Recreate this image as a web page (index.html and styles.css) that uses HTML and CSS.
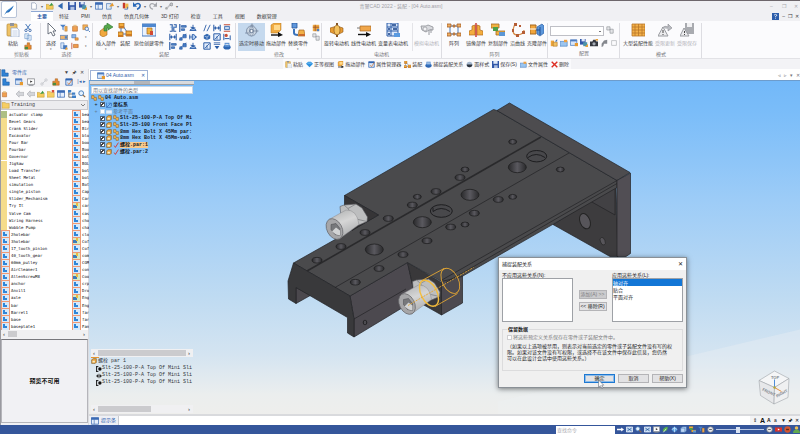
FILE: index.html
```html
<!DOCTYPE html>
<html lang="zh-CN">
<head>
<meta charset="utf-8">
<title>04 Auto.asm</title>
<link rel="stylesheet" href="styles.css">
</head>
<body>
<svg class="sprite" aria-hidden="true">
  <symbol id="quill" viewBox="0 0 16 16"><path d="M1.500 14.500 5 9Q8 7 14.500 2 12 8 8 11L4.500 11.500z" fill="#1d66b5"/><path d="M5 10 13 3" stroke="#8cc4ee" stroke-width=".8"/></symbol>
  <symbol id="new" viewBox="0 0 10 10"><path d="M2 1h4l2 2v6H2z" fill="#fff" stroke="#9aa6bd"/></symbol>
  <symbol id="open" viewBox="0 0 10 10"><path d="M0 9V3h3l1 1h5v5z" fill="#f4ca5c" stroke="#b98f2e" stroke-width=".6"/><path d="m4 5 3-4 2 3z" fill="#3b9a44"/></symbol>
  <symbol id="prev" viewBox="0 0 10 10"><path d="m1 5 6-4v8z" fill="#2f68b0"/></symbol>
  <symbol id="save" viewBox="0 0 10 10"><path d="M0 0h10v10H0z" fill="#3358a8"/><path d="M2 0h6v4H2z" fill="#dfe8f7"/><path d="M3 6h5v4H3z" fill="#aebfe0"/></symbol>
  <symbol id="saveall" viewBox="0 0 10 10"><path d="M0 0h7v7H0z" fill="#3358a8"/><path d="M2 0h4v3H2z" fill="#dfe8f7"/><path d="M4 4h5v5H4z" fill="#4e95a8"/><path d="m6 10 4-4v4z" fill="#e7a43b"/></symbol>
  <symbol id="win" viewBox="0 0 10 10"><path d="M.5 1h9v8h-9z" fill="#e5eefb" stroke="#3d6cb5"/><path d="M.5 1h9v2h-9zM4 3v6" fill="#3d6cb5" stroke="#3d6cb5" stroke-width=".8"/></symbol>
  <symbol id="winstar" viewBox="0 0 10 10"><path d="M.5 1h8v7h-8z" fill="#d7e5f8" stroke="#5482c2"/><path d="M.5 1h8v2h-8z" fill="#4d7cbf"/><path d="M6 5h4v4H6z" fill="#e79a2f"/></symbol>
  <symbol id="winout" viewBox="0 0 10 10"><path d="M.5 2h6v7h-6z" fill="#dce8f7" stroke="#5d85bd"/><path d="m4 6 4-5 2 4z" fill="#e79a2f"/></symbol>
  <symbol id="hand" viewBox="0 0 10 10"><path d="M1 1h3v7H1z" fill="#c53b2e"/><path d="M4 2h4v6H4z" fill="#f0b64a"/><path d="M3 9h4V6" stroke="#3d6cb5" fill="none"/></symbol>
  <symbol id="undo" viewBox="0 0 10 10"><path d="M2 4q5-4 7 0 0 4-4 5" fill="none" stroke="#2a69b8" stroke-width="1.900"/><path d="M0 0v6h5z" fill="#2a69b8"/></symbol>
  <symbol id="redo" viewBox="0 0 10 10"><path d="M8 4Q3 0 1 4q0 4 4 5" fill="none" stroke="#a4a6ab" stroke-width="1.500"/><path d="M10 0v6H5z" fill="#a4a6ab"/></symbol>
  <symbol id="links" viewBox="0 0 10 10"><path d="M1 9V7l4-1V4h3" fill="none" stroke="#a4a6ab"/><circle cx="8" cy="3" r="1.800" fill="#c9cace" stroke="#8d8f94"/><circle cx="2" cy="8" r="1.500" fill="#aaa"/></symbol>
  <symbol id="paste" viewBox="0 0 14 14"><rect x="1" y="1" width="10" height="12" rx="1" fill="#efc266" stroke="#b68b3b" stroke-width=".7"/><path d="M4 0h4v3H4z" fill="#8f949d"/><path d="M5 5h6l2 2v7H5z" fill="#fbfdff" stroke="#8fa5c8" stroke-width=".7"/><path d="M6.500 8h5M6.500 10h5M6.500 12h5" stroke="#a9bbd6" stroke-width=".6"/></symbol>
  <symbol id="cut" viewBox="0 0 10 10"><path d="m2 0 5 7M8 0 3 7" stroke="#4577b8" stroke-width="1.200"/><circle cx="2.500" cy="8" r="1.500" fill="none" stroke="#2c5da3"/><circle cx="7.500" cy="8" r="1.500" fill="none" stroke="#2c5da3"/></symbol>
  <symbol id="copy" viewBox="0 0 10 10"><path d="M1 1h5v6H1zM4 3h5v6H4z" fill="#e4effb" stroke="#6f98ca" stroke-width=".8"/></symbol>
  <symbol id="puzzle" viewBox="0 0 10 10"><path d="M1 4h3V1h3v3h2v5H1z" fill="#e78a2e" stroke="#9d571b" stroke-width=".6"/><path d="M1 6h4v3H1z" fill="#4b8b3e"/></symbol>
  <symbol id="cursor" viewBox="0 0 14 14"><path d="M4 0v11l3-2 2 4 2-1-2-4h3z" fill="#fff" stroke="#5d6572" stroke-width=".9"/></symbol>
  <symbol id="filter" viewBox="0 0 10 10"><path d="M0 1h7L4.500 4v4L3 7V4z" fill="#4d82c8"/><path d="M6 3h3v6H6z" fill="#efac52" stroke="#a8691f" stroke-width=".5"/></symbol>
  <symbol id="cup" viewBox="0 0 10 10"><path d="M2 3h6v6H2z" fill="#f0a04e" stroke="#b15d1e" stroke-width=".7"/><path d="M3 1h4v2H3z" fill="#e9c385"/></symbol>
  <symbol id="find" viewBox="0 0 10 10"><path d="M1 1h6v6H1z" fill="#f2b056" stroke="#b46e27" stroke-width=".6"/><circle cx="6" cy="6" r="2.200" fill="#e5f1ff" stroke="#3f70b4"/><path d="m8 8 2 2" stroke="#3f70b4"/></symbol>
  <symbol id="bar" viewBox="0 0 10 10"><path d="M0 3h10v5H0z" fill="#f0b56c" stroke="#4c7fc0" stroke-width=".9"/><path d="M6 4h3v3H6z" fill="#4a80c2"/></symbol>
  <symbol id="conn" viewBox="0 0 10 10"><path d="M1 2h5v4H1z" fill="#8fb8ea" stroke="#386cae" stroke-width=".7"/><path d="M5 6h4v3H5z" fill="#f1a64b" stroke="#b16a25" stroke-width=".6"/></symbol>
  <symbol id="pair" viewBox="0 0 10 10"><path d="M1 1h4v7H1z" fill="#d4e4f9" stroke="#4676b8" stroke-width=".7"/><path d="M4 4h5v5H4z" fill="#4579bf"/><path d="m6 10 2-4 2 3z" fill="#e9a13e"/></symbol>
  <symbol id="bracket" viewBox="0 0 10 10"><path d="M1 1v8" stroke="#c34b34"/><path d="M3 3h6v4H3z" fill="#f09b49" stroke="#b66120" stroke-width=".7"/></symbol>
  <symbol id="insert" viewBox="0 0 14 14"><path d="M1 8 5 5l3 2v5l-4 2-3-2z" fill="#f1a83e" stroke="#a3651c" stroke-width=".6"/><path d="M5 8V4q0-2 3-2V0l6 4-5 3V5H8v3z" fill="#55a74a" stroke="#2e7330" stroke-width=".6"/></symbol>
  <symbol id="assem" viewBox="0 0 14 14"><path d="M3 5v6h6M5 3l4 6" stroke="#4b77b7" fill="none"/><path d="M1 0h5v5H1zM0 9h5v5H0zM8 8h6v5H8z" fill="#f4ae3e" stroke="#a76820" stroke-width=".8"/><path d="M1 3h5v2H1zM0 12h5v2H0zM8 11h6v2H8z" fill="#cb7b25"/></symbol>
  <symbol id="inplace" viewBox="0 0 14 14"><path d="M0 1h14v12H0z" fill="#e9f2ff" stroke="#4479be"/><path d="M0 1h14v3H0z" fill="#4e87cf"/><path d="M5 5h5v6H5z" fill="#f2b53f" stroke="#a76820" stroke-width=".7"/><path d="M8 8h3v4H8z" fill="#d24a33"/></symbol>
  <symbol id="relA" viewBox="0 0 10 10"><path d="M1 1h3v8H1M6 1h3v3H6v5h3" fill="none" stroke="#285aa5" stroke-width="1.400"/><path d="M2 4h6" stroke="#6698d3"/></symbol>
  <symbol id="relB" viewBox="0 0 10 10"><path d="M1 0v10" stroke="#285aa5" stroke-width="1.500"/><path d="M3 2h6v2H3zM3 6h4v2H3z" fill="#5a8bcb" stroke="#285aa5" stroke-width=".9"/></symbol>
  <symbol id="relC" viewBox="0 0 10 10"><path d="M5 1v4M2 4l6 1M1 8q4-5 8 0z" fill="#9fc1ea" stroke="#285aa5" stroke-width="1.200"/></symbol>
  <symbol id="relD" viewBox="0 0 10 10"><path d="M1 1v8M9 1v8M1 5h8M3 3v4M7 3v4" stroke="#285aa5" stroke-width="1.300"/></symbol>
  <symbol id="relE" viewBox="0 0 10 10"><path d="M0 9 9 1" stroke="#285aa5"/><path d="M1 6h3v3H1zM5 2h4v4H5z" fill="#477cc3" stroke="#285aa5" stroke-width=".8"/></symbol>
  <symbol id="relF" viewBox="0 0 10 10"><path d="M0 5h10" stroke="#285aa5"/><path d="M1 2v6M4 2h2q5 3 0 6H4z" fill="#b2cdf0" stroke="#285aa5" stroke-width="1.200"/></symbol>
  <symbol id="relG" viewBox="0 0 10 10"><path d="M1 9 4 1M5 9l4-8" stroke="#285aa5" stroke-width="1.100"/></symbol>
  <symbol id="relH" viewBox="0 0 10 10"><path d="m1 3 4-2 4 2v4L5 9 1 7z" fill="#3267b1"/><path d="m2 4 3 1 3-2M5 5v4" fill="none" stroke="#cbdcf4" stroke-width=".8"/></symbol>
  <symbol id="relI" viewBox="0 0 10 10"><path d="M1 1h8v8H1z" fill="#e3edfb" stroke="#285aa5" stroke-width="1.200"/><path d="m2 8 6-6M5 4v4" stroke="#285aa5"/></symbol>
  <symbol id="relJ" viewBox="0 0 10 10"><path d="M1 1h8M1 3h8" stroke="#285aa5"/><path d="M2 5h6L5 9z" fill="#285aa5"/></symbol>
  <symbol id="relK" viewBox="0 0 10 10"><path d="M1 1h8M1 9h8" stroke="#c84e36" stroke-width="1.400"/><path d="M2 3h6v4H2z" fill="#c6d9f2" stroke="#285aa5"/></symbol>
  <symbol id="relL" viewBox="0 0 10 10"><path d="M1 1v8M9 3v6M2 7h6" stroke="#285aa5" stroke-width="1.200"/><circle cx="4" cy="3" r="2" fill="#c84e36"/></symbol>
  <symbol id="disc" viewBox="0 0 10 10"><ellipse cx="5" cy="6.500" rx="4.500" ry="3" fill="#2d66b3"/><path d="M2 1h6v5H2z" fill="#5a90d2"/><path d="M3 3h4" stroke="#fff"/></symbol>
  <symbol id="gyro" viewBox="0 0 14 14"><path d="m7 0 2 3H5zM14 8l-3 2V6z" fill="#9aa9bd"/><circle cx="6.500" cy="8" r="5" fill="#cbd6e2" stroke="#8495ac"/><ellipse cx="6.500" cy="8" rx="2" ry="5" fill="none" stroke="#8495ac" stroke-width=".7"/><circle cx="6.500" cy="8" r="1.700" fill="#f4f8fc" stroke="#5d708c"/><path d="M0 10h4M7 2v3M9 8h3" stroke="#70829c" stroke-width=".7"/></symbol>
  <symbol id="drag" viewBox="0 0 14 14"><path d="m2 2 3-2h7v7l-3 3H2z" fill="#f0ab42" stroke="#ad701f" stroke-width=".5"/><path d="M5 2h6v5H5z" fill="#ffd88a"/><path d="M2 12h9" stroke="#111" stroke-width="1.400"/><path d="m9 9 5 3-5 2z" fill="#111"/></symbol>
  <symbol id="replace" viewBox="0 0 14 14"><path d="M1 0h5v5H1z" fill="#5f97dc" stroke="#28599b" stroke-width=".8"/><path d="M3 6v4q0 2 4 2" fill="none" stroke="#3a74bd" stroke-width="2"/><path d="M8 7h5l1 6H7z" fill="#f2b147" stroke="#a96b22" stroke-width=".7"/><path d="M8 11h6v2H8z" fill="#cb6a2d"/></symbol>
  <symbol id="tiles" viewBox="0 0 10 10"><path d="M1 1h8v8H1z" fill="#efaa43"/><path d="M1 4h8M4 1v8" stroke="#9c4e20"/><path d="M6 6h3v3H6z" fill="#4f7fc0"/></symbol>
  <symbol id="dup" viewBox="0 0 10 10"><path d="M1 1h4v4H1zM5 4h4v5H5z" fill="#e4e5e8" stroke="#8f9297" stroke-width=".8"/></symbol>
  <symbol id="rot" viewBox="0 0 14 14"><path d="M0 5 7 3l6 2v4l-6 3-7-3z" fill="#e89c32" stroke="#8c5517" stroke-width=".6"/><path d="M6 0h2v14H6z" fill="#855527"/><ellipse cx="7" cy="7" rx="3" ry="5" fill="#f3c15e" stroke="#7b4b16" stroke-width=".6"/></symbol>
  <symbol id="lin" viewBox="0 0 14 14"><path d="M3 3h11v5H3z" fill="#f0a64a" stroke="#a86722" stroke-width=".7"/><path d="M0 5h3" stroke="#777"/><path d="M1 11.500h9" stroke="#111" stroke-width="1.400"/><path d="m9 9 5 2.500L9 14z" fill="#111"/></symbol>
  <symbol id="vart" viewBox="0 0 14 14"><path d="M1 0h11v13H1z" fill="#dce8fa" stroke="#2e5fa9"/><path d="M1 4h11M1 8h11M5 0v13" stroke="#2e5fa9"/><path d="M6 2h4M2 6h2M7 6h4M2 11h2" stroke="#123e87" stroke-width="1.400"/><path d="M8 10h6v4H8z" fill="#5a9ae0"/></symbol>
  <symbol id="sim" viewBox="0 0 14 14"><path d="M1 3h5l2-1 5 2v3H9l-3 2-4-2z" fill="#d9dade" stroke="#96989e" stroke-width=".9"/><circle cx="5" cy="6" r="2" fill="#f3f3f5" stroke="#96989e" stroke-width=".7"/><path d="M9 7v5M11 6v4" stroke="#96989e"/></symbol>
  <symbol id="pattern" viewBox="0 0 14 14"><path d="M3 3h8v8H3z" fill="none" stroke="#4c7cba"/><path d="M0 1h4v3H0zM10 1h4v3h-4zM0 10h4v3H0zM10 10h4v3h-4zM6 2h2v2H6zM6 10h2v2H6z" fill="#efb064" stroke="#a35d27" stroke-width=".8"/></symbol>
  <symbol id="mirror" viewBox="0 0 14 14"><path d="M0 12V8l3-1V3l3-1v10zM14 12V8l-3-1V3L8 2v10z" fill="#f3ad3e" stroke="#af6c21" stroke-width=".7"/><path d="M7 0v14" stroke="#c82e26" stroke-width="1.400"/></symbol>
  <symbol id="cparts" viewBox="0 0 14 14"><path d="M0 1h8v4H0zM5 8h9v4H5z" fill="#f1b342" stroke="#a46923" stroke-width=".8"/><path d="M2 4h5v4H2z" fill="#4da048"/><path d="M8 9h6v4H8z" fill="#5c97d5"/></symbol>
  <symbol id="curve" viewBox="0 0 14 14"><path d="M4 1Q-1 12 7 12q6-1 6-5" fill="none" stroke="#d48c48" stroke-width="1.200"/><path d="M3 0h3v3H3zM1 6h2v3H1zM5 11h3v3H5zM11 8h3v3h-3zM8 2h2v2H8z" fill="#b55d35"/></symbol>
  <symbol id="clone" viewBox="0 0 14 14"><path d="M0 2h6v9H0z" fill="#f1a53b" stroke="#a46923"/><path d="M0 6h6" stroke="#fff"/><path d="m7 4 5-3 2 2v7l-4 3-3-2z" fill="#5c97db" stroke="#2c61a7" stroke-width=".7"/><path d="M6 7h4M10 4v8" stroke="#214f91"/></symbol>
  <symbol id="mesh" viewBox="0 0 14 14"><path d="M1 1h13v12H1z" fill="#f4b14a"/><path d="M1 1h13v12H1zM4 1v12M7.500 1v12M11 1v12M1 4h13M1 7h13M1 10h13" fill="none" stroke="#b97728" stroke-width=".8"/></symbol>
  <symbol id="limup" viewBox="0 0 14 14"><path d="m0 13 5-9 5 9z" fill="#ececee" stroke="#999ba0"/><path d="M4 5q3-3 6-1V1l4 4-4 3V6" fill="#b9bbc0" stroke="#898b90" stroke-width=".6"/><path d="M5 7v3M5 11v1" stroke="#444"/></symbol>
  <symbol id="limsave" viewBox="0 0 14 14"><path d="M5 0h9v11H5z" fill="#a9abb0"/><path d="M7 0h5v4H7z" fill="#f1f1f3"/><path d="m0 13 4-8 5 8z" fill="#ececee" stroke="#999ba0"/><path d="M4.500 8v2M4.500 11v1" stroke="#444"/></symbol>
  <symbol id="cfgA" viewBox="0 0 10 10"><path d="M1 2h4v7H1z" fill="#eda63d"/><path d="M4 4h5v5H4z" fill="#f2c263" stroke="#ab6d22" stroke-width=".7"/><path d="m6 3 3-3v3z" fill="#3f72b8"/></symbol>
  <symbol id="cfgB" viewBox="0 0 10 10"><path d="M0 3h9v6H0z" fill="#9cc5ef" stroke="#4b80bf" stroke-width=".8"/><path d="M5 1h4v3H5z" fill="#f0a240"/></symbol>
  <symbol id="cam" viewBox="0 0 10 10"><path d="M0 3h3l1-2h3l1 2h2v6H0z" fill="#363940"/><circle cx="5" cy="6" r="2" fill="#a6acb6"/><path d="M7 0h3v2H7z" fill="#e8a33b"/></symbol>
  <symbol id="wrench" viewBox="0 0 10 10"><path d="M2 10V6l3-4 4-1v5H5L4 9z" fill="#85888e"/></symbol>
  <symbol id="box" viewBox="0 0 10 10"><path d="M2 2h6v6H2z" fill="none" stroke="#b9bbbf"/></symbol>
  <symbol id="plane" viewBox="0 0 10 10"><path d="M0 2h10v6H0z" fill="#e3effb" stroke="#9ab6d6" stroke-width=".6"/></symbol>
  <symbol id="cube" viewBox="0 0 10 10"><path d="m1 3 3-2h5v6L7 9H1z" fill="#bcd6f4" stroke="#3d70b0" stroke-width=".7"/><path d="M1 3h6v6" fill="none" stroke="#3d70b0" stroke-width=".8"/></symbol>
  <symbol id="gem" viewBox="0 0 10 10"><path d="m3 1h4l3 3-5 5-5-5z" fill="#2b91df"/><path d="M2 3h6" stroke="#9bd4ff"/></symbol>
  <symbol id="prop" viewBox="0 0 10 10"><path d="M1 1h8v8H1z" fill="#d8e7fa" stroke="#2e63b0"/><path d="M1 1h8v2H1z" fill="#2e63b0"/><path d="m3 6 2 2 4-6" fill="none" stroke="#d36e28"/></symbol>
  <symbol id="ball" viewBox="0 0 10 10"><circle cx="5" cy="5" r="4" fill="#a6b9cf"/><path d="M1 5h8q0 4-4 4T1 5z" fill="#2d343f"/></symbol>
  <symbol id="x" viewBox="0 0 10 10"><path d="m1 1 8 8M9 1 1 9" stroke="#dd2c22" stroke-width="2"/></symbol>
  <symbol id="part" viewBox="0 0 10 10"><path d="M1 9V1h4v4h4v4z" fill="#2f82d4" stroke="#195ba6" stroke-width=".7"/></symbol>
  <symbol id="tree" viewBox="0 0 10 10"><path d="M1 0v9h5M1 5h5" fill="none" stroke="#555"/><path d="M5 3h4v3H5zM5 7h5v3H5zM0 0h4v3H0z" fill="#3f7fc7"/></symbol>
  <symbol id="folder" viewBox="0 0 10 10"><path d="M0 9V2h4l1 1h4v6z" fill="#f6ce64" stroke="#bd9534" stroke-width=".6"/></symbol>
  <symbol id="folderx" viewBox="0 0 10 10"><path d="M0 9V2h4l1 1h4v6z" fill="#f6ce64" stroke="#bd9534" stroke-width=".6"/><path d="M6 0h3v3H6z" fill="#d94d38"/></symbol>
  <symbol id="back" viewBox="0 0 10 10"><path d="M0 5 4 1v2h6v4H4v2z" fill="#d3d5d9" stroke="#9b9ea4" stroke-width=".6"/></symbol>
  <symbol id="mag" viewBox="0 0 10 10"><circle cx="4" cy="4" r="3" fill="#e7f2fd" stroke="#4b80bd" stroke-width="1.200"/><path d="m6 6 3 3" stroke="#936b43" stroke-width="1.500"/></symbol>
  <symbol id="play" viewBox="0 0 10 10"><path d="M.5 1h9v7h-9z" fill="#fff" stroke="#87898e"/><path d="m4 3 3 1.500L4 6z" fill="#333"/><path d="M2 9.500h6" stroke="#87898e"/></symbol>
  <symbol id="chain" viewBox="0 0 10 10"><path d="m3 7 4-4" stroke="#c3c5ca"/><circle cx="2.500" cy="7.500" r="1.500" fill="none" stroke="#c3c5ca"/><circle cx="7.500" cy="2.500" r="1.500" fill="none" stroke="#c3c5ca"/></symbol>
  <symbol id="fit" viewBox="0 0 10 10"><path d="M.5 1.500h9v7h-9z" fill="#b7d3f3" stroke="#fff"/><path d="m2 3 6 4M8 3 2 7" stroke="#27548f"/></symbol>
  <symbol id="leaf" viewBox="0 0 10 10"><path d="M1 8Q1 2 8 1q1 6-5 7z" fill="#58b04e"/><path d="m2 9 4-5" stroke="#fff"/></symbol>
  <symbol id="spin" viewBox="0 0 10 10"><circle cx="5" cy="5" r="3.500" fill="#5ba3e4"/><path d="M1 5q4-4 8 0M5 1v8" fill="none" stroke="#d6ecff"/></symbol>
  <symbol id="round" viewBox="0 0 10 10"><circle cx="5" cy="5" r="4" fill="#e6e8ec" stroke="#777"/><path d="M3 5h4" stroke="#333"/></symbol>
  <symbol id="rec" viewBox="0 0 10 10"><path d="M0 2h10v6H0z" fill="#d9332a"/><path d="m4 3.500 3 1.500-3 1.500z" fill="#fff"/></symbol>
  <symbol id="stop" viewBox="0 0 10 10"><circle cx="5" cy="5" r="4.500" fill="#d4552f"/><path d="M3 4h4v2H3z" fill="#5c2b21"/></symbol>
  <symbol id="person" viewBox="0 0 10 10"><circle cx="5" cy="3" r="2.500" fill="#edbd55"/><path d="M0 10q0-5 5-5t5 5z" fill="#62a94e"/></symbol>
  <symbol id="go" viewBox="0 0 10 10"><path d="M0 4h6V2l4 3-4 3V6H0z" fill="#fff"/></symbol>
  <symbol id="help" viewBox="0 0 10 10"><path d="M0 0h10v10H0z" fill="#2d5eaa"/><path d="M3 3q2-2 4 0 0 1-2 2v1M5 7v1" fill="none" stroke="#fff" stroke-width="1.200"/></symbol>
  <symbol id="tick" viewBox="0 0 10 10"><path d="m2 6 2 3 5-8" fill="none" stroke="#d8372d" stroke-width="1.500"/></symbol>
  <symbol id="solid" viewBox="0 0 10 10"><path d="m1 3 3-2h5v6L7 9H1z" fill="#e9a23a" stroke="#5a4a26" stroke-width=".8"/><path d="M2.500 4.500h4v3h-4z" fill="#f4ecc8"/></symbol>
  <symbol id="mini" viewBox="0 0 10 10"><path d="M1 1h4v3h4v5H5V6H1z" fill="#f2b551" stroke="#7d5420" stroke-width=".8"/></symbol>
  <symbol id="coord" viewBox="0 0 10 10"><path d="M1 1v8h8M1 9l7-7M4 2h5v5" fill="none" stroke="#2a62b4" stroke-width="1.100"/></symbol>
  <symbol id="mate" viewBox="0 0 10 10"><path d="M1 0v10M1 1h3M1 9h3" stroke="#111" stroke-width="1.600"/><circle cx="6.500" cy="5" r="2.800" fill="#111"/></symbol>
  <symbol id="axis" viewBox="0 0 10 10"><path d="M0 5h10" stroke="#111"/><path d="M4 1v8L1 5zM6 1v8l3-4z" fill="#222"/></symbol>
</svg>

<div class="app">
  <header class="top">
    <button class="appbtn" aria-label="应用程序菜单"><svg><use href="#quill"/></svg></button>
    <div class="titlebar">
      <div class="qat">
        <svg class="i"><use href="#new"/></svg><b>▾</b>
        <svg class="i"><use href="#open"/></svg><svg class="i"><use href="#prev"/></svg>
        <svg class="i"><use href="#save"/></svg><svg class="i"><use href="#saveall"/></svg><b>▾</b>
        <svg class="i"><use href="#win"/></svg><svg class="i"><use href="#winout"/></svg><b>▾</b>
        <svg class="i"><use href="#hand"/></svg><svg class="i"><use href="#undo"/></svg><b>▾</b>
        <svg class="i"><use href="#redo"/></svg><b>▾</b><svg class="i"><use href="#links"/></svg><b>▾</b>
      </div>
      <div class="title">青翼CAD 2022 - 装配 - [04 Auto.asm]</div>
      <div class="wctl"><span>–</span><span>❐</span><span>✕</span></div>
    </div>
    <nav class="tabs">
      <a class="on" href="#">主要</a><a href="#">特征</a><a href="#">PMI</a><a href="#">仿真</a><a href="#">仿真几何体</a><a href="#">3D 打印</a><a href="#">检查</a><a href="#">工具</a><a href="#">视图</a><a href="#">数据管理</a>
      <div class="dctl"><svg class="i"><use href="#help"/></svg><span>–</span><span>❐</span><span>✕</span></div>
    </nav>
  </header>

  <section class="ribbon">
    <div class="group g1"><div class="row">
      <button class="big"><svg><use href="#paste"/></svg>粘贴</button>
      <div class="icons one"><svg class="i"><use href="#cut"/></svg><svg class="i"><use href="#copy"/></svg><svg class="i"><use href="#puzzle"/></svg></div>
    </div><h2>剪贴板</h2></div>
    <div class="group g2"><div class="row">
      <button class="big"><svg><use href="#cursor"/></svg>选择<i>▾</i></button>
      <div class="icons three"><svg class="i"><use href="#filter"/></svg><svg class="i"><use href="#cup"/></svg><svg class="i"><use href="#find"/></svg><svg class="i"><use href="#bar"/></svg><svg class="i"><use href="#conn"/></svg><i>▾</i><svg class="i"><use href="#pair"/></svg><svg class="i"><use href="#bracket"/></svg><i>▾</i></div>
    </div><h2>选择</h2></div>
    <div class="group g3"><div class="row">
      <button class="big"><svg><use href="#insert"/></svg>插入部件<i>▾</i></button>
      <button class="big"><svg><use href="#assem"/></svg>装配</button>
      <button class="big"><svg><use href="#inplace"/></svg>原位创建零件</button>
      <div class="icons three near"><svg class="i"><use href="#relA"/></svg><svg class="i"><use href="#relB"/></svg><svg class="i"><use href="#relC"/></svg><svg class="i"><use href="#relD"/></svg><svg class="i"><use href="#relE"/></svg><svg class="i"><use href="#relF"/></svg><svg class="i"><use href="#relB"/></svg><svg class="i"><use href="#relE"/></svg><svg class="i"><use href="#relC"/></svg></div>
      <div class="icons three near"><svg class="i"><use href="#relG"/></svg><svg class="i"><use href="#relD"/></svg><svg class="i"><use href="#relK"/></svg><svg class="i"><use href="#relH"/></svg><svg class="i"><use href="#relI"/></svg><svg class="i"><use href="#relL"/></svg><svg class="i"><use href="#relI"/></svg><svg class="i"><use href="#relJ"/></svg><svg class="i"><use href="#disc"/></svg></div>
    </div><h2>装配</h2></div>
    <div class="group g4"><div class="row">
      <button class="big sel"><svg><use href="#gyro"/></svg>选定时移动</button>
      <button class="big"><svg><use href="#drag"/></svg>拖动部件</button>
      <button class="big"><svg><use href="#replace"/></svg>替换零件<i>▾</i></button>
      <div class="icons one"><svg class="i"><use href="#tiles"/></svg><svg class="i"><use href="#dup"/></svg></div>
    </div><h2>修改</h2></div>
    <div class="group g5"><div class="row">
      <button class="big"><svg><use href="#rot"/></svg>旋转电动机</button>
      <button class="big"><svg><use href="#lin"/></svg>线性电动机</button>
      <button class="big"><svg><use href="#vart"/></svg>变量表电动机</button>
      <button class="big off split" disabled><svg><use href="#sim"/></svg>模拟电动机</button>
    </div><h2>电动机</h2></div>
    <div class="group g6"><div class="row">
      <button class="big"><svg><use href="#pattern"/></svg>阵列</button>
      <button class="big"><svg><use href="#mirror"/></svg>镜像部件</button>
      <button class="big"><svg><use href="#cparts"/></svg>复制部件</button>
      <button class="big"><svg><use href="#curve"/></svg>沿曲线</button>
      <button class="big"><svg><use href="#clone"/></svg>克隆部件</button>
    </div><h2>阵列</h2></div>
    <div class="group g7"><div class="cfg">
      <div class="cfgrow"><select aria-label="配置"><option></option></select><svg class="i"><use href="#dup"/></svg></div>
      <div class="cfgrow"><svg class="i"><use href="#cfgA"/></svg><svg class="i"><use href="#cfgB"/></svg><svg class="i"><use href="#winstar"/></svg><svg class="i"><use href="#saveall"/></svg><svg class="i"><use href="#cam"/></svg><svg class="i"><use href="#wrench"/></svg><svg class="i"><use href="#box"/></svg></div>
    </div><h2>配置</h2></div>
    <div class="group g8"><div class="row">
      <button class="big"><svg><use href="#mesh"/></svg>大型装配性能</button>
      <button class="big off" disabled><svg><use href="#limup"/></svg>受限更新</button>
      <button class="big off" disabled><svg><use href="#limsave"/></svg>受限保存</button>
    </div><h2>模式</h2></div>
  </section>

  <div class="quick"><div class="quickbar">
    <button><svg class="i"><use href="#paste"/></svg>粘贴</button>
    <button><svg class="i"><use href="#gem"/></svg>正等视图</button>
    <button><svg class="i"><use href="#drag"/></svg>拖动部件</button>
    <button><svg class="i"><use href="#prop"/></svg>属性管理器</button>
    <button><svg class="i"><use href="#assem"/></svg>装配</button>
    <button><svg class="i"><use href="#disc"/></svg>捕捉装配关系</button>
    <button><svg class="i"><use href="#ball"/></svg>面样式</button>
    <button><svg class="i"><use href="#save"/></svg>保存(S)</button>
    <button><svg class="i"><use href="#cfgB"/></svg>文件属性</button>
    <button><svg class="i"><use href="#x"/></svg>删除</button>
  </div></div>

  <main class="body">
    <aside class="side">
      <div class="phead"><svg class="i"><use href="#part"/></svg><span>零件库</span><em>▼</em><em>🖈</em><em>✕</em></div>
      <div class="ptabs"><svg class="i act"><use href="#part"/></svg><svg class="i"><use href="#winstar"/></svg><svg class="i"><use href="#play"/></svg><svg class="i"><use href="#chain"/></svg><svg class="i"><use href="#puzzle"/></svg><svg class="i"><use href="#prop"/></svg><span>|◂ ▸</span></div>
      <div class="ptools"><svg class="i"><use href="#cup"/></svg><svg class="i"><use href="#back"/></svg><svg class="i"><use href="#back"/></svg><svg class="i"><use href="#open"/></svg><svg class="i"><use href="#folderx"/></svg><svg class="i"><use href="#win"/></svg><svg class="i"><use href="#tree"/></svg><svg class="i"><use href="#mag"/></svg></div>
      <button class="path"><svg class="i"><use href="#folder"/></svg><span>Training</span><svg class="chev" viewBox="0 0 6 4"><path d="m1 1 2 2 2-2" fill="none" stroke="#666" stroke-width=".8"/></svg></button>
      <div class="lists">
        <ul>
          <li class="d cur">actuator clamp</li><li class="d">Bevel Gears</li><li class="d">Crank Slider</li><li class="d">Excavator</li><li class="d">Four Bar</li><li class="d">Fourbar</li><li class="d">Governor</li><li class="d">JigSaw</li><li class="d">Load Transfer</li><li class="d">Sheet Metal</li><li class="d">simulation</li><li class="d">single_piston</li><li class="d">Slider_Mechanism</li><li class="d">Try It</li><li class="d">Valve Cam</li><li class="d">Wiring Harness</li><li class="d">Wobble Pump</li><li>2holebar</li><li>3holebar</li><li>17_tooth_pinion</li><li>40_tooth_gear</li><li>60mm_pulley</li><li>AirCleaner1</li><li>AllenScrewM8</li><li>anchor</li><li>Anvil1</li><li>axle</li><li>bar</li><li>Barrel1</li><li>base</li><li>baseplate1</li>
        </ul>
        <ul>
          <li>bea</li><li>bea</li><li>Bir</li><li>blo</li><li>boo</li><li>Boo</li><li>bol</li><li>BOL</li><li>bol</li><li>bol</li><li>Bot</li><li>Cap</li><li>Car</li><li class="a">car</li><li>cas</li><li>cho</li><li>cha</li><li>clo</li><li class="a">Cof</li><li>Cof</li><li class="a">com</li><li>COM</li><li>con</li><li class="a">Coo</li><li>crp</li><li>Dro</li><li class="a">Eng</li><li>Eng</li><li>far</li><li>far</li><li>Fan</li>
        </ul>
      </div>
      <div class="hbar"><span>‹</span><i class="short"></i><span>›</span></div>
      <div class="preview">预览不可用</div>
    </aside>

    <section class="work">
      <div class="docs"><a class="doc" href="#"><svg class="i"><use href="#winstar"/></svg><span>04 Auto.asm</span><b>✕</b></a><div class="docctl"><span>◃</span><span>▹</span><span>▾</span><span>✕</span></div></div>
      <div class="view">
        <svg class="scene" viewBox="89 81 711 334" preserveAspectRatio="xMidYMid slice" role="img" aria-label="装配模型">
          <defs>
            <linearGradient id="sky" x2="0" y2="1"><stop offset="0" stop-color="#72b8f9"/><stop offset=".1" stop-color="#7bbdf9"/><stop offset=".36" stop-color="#9dccf7"/><stop offset=".65" stop-color="#bfdbf2"/><stop offset=".82" stop-color="#d4e4f1"/><stop offset=".94" stop-color="#ebeeee"/><stop offset="1" stop-color="#eeeeec"/></linearGradient>
            <linearGradient id="hole"><stop offset="0" stop-color="#29292b"/><stop offset=".5" stop-color="#5a595f"/><stop offset="1" stop-color="#29292b"/></linearGradient>
            <linearGradient id="metal" x1=".3" x2=".7" y2="1"><stop offset="0" stop-color="#b4b5b6"/><stop offset=".4" stop-color="#d6d6d6"/><stop offset="1" stop-color="#a5a6a8"/></linearGradient>
            <g id="bolt">
              <path d="M340 207 344 205.500 356 204.500 362 208.500 367.500 217.500 367 222 359 225.500 341 218z" fill="#bdbebf" stroke="#55565a" stroke-width=".6"/>
              <path d="M344 205.500 348 209 356 204.500M348 209 354 219 367 222M354 219 359 225" fill="none" stroke="#6d6e72" stroke-width=".6"/>
              <path d="M329 220 346 210.500Q357 210 359 225L339 239.500z" fill="url(#metal)" stroke="#8a8b8e" stroke-width=".5"/>
              <ellipse cx="334.500" cy="229.500" rx="7.500" ry="11" transform="rotate(-28 334.500 229.500)" fill="#a6a6a8" stroke="#66676a" stroke-width=".7"/>
              <path d="m331 225 5-1 4 5v7l-5-1-4-5z" fill="#77787b" stroke="#48494c" stroke-width=".5"/>
              <path d="m332 232 4-4 4 3v5l-4-1z" fill="#d2d3d4"/>
            </g>
          </defs>
          <rect x="89" y="81" width="711" height="334" fill="url(#sky)"/>
          <path d="M498 402 800 330v85H498z" fill="#eef1f4" opacity=".35"/>
          <g stroke="#222225" stroke-width=".7" stroke-linejoin="round">
            <path d="M553 225 616 186 618 257H610z" fill="#3d3c3e"/>
            <path d="M591 202 615 215.500V188" fill="#424144"/>
            <path d="M296 288V304L312 295 320 300z" fill="#4b484d"/>
            <path d="M350 296.500 407.500 263 416 300 354 337.500V319.500z" fill="#4c494f"/>
            <path d="M354 319.500 406 289.500" fill="none"/>
            <path d="M407.500 263 441.500 283V315.500L416 301z" fill="#39383a"/>
            <path d="M441.500 281 462.500 271V303.500L441.500 315.500z" fill="#4c494f"/>
            <path d="M293.500 263.500 378.500 215.500 344.500 196 493.500 110 497 111 617 181 617 188 462 277 441.500 282 407.500 263 350 296.500z" fill="#4a4a4c"/>
            <path d="M344.500 196 378.500 215.500 352 231 344.500 214z" fill="#363537"/>
            <path d="M293.500 263.500 350 296.500 354 319.500V337.500L347.500 333.500V318L296 288V304L288.500 299.500 288 281.500z" fill="#39393b"/>
            <path d="M497 111 509.500 103.500 630 173 617 181z" fill="#4d4c4f"/>
            <path d="M617 181 630.500 173.500V254L626 257H617z" fill="#514e54"/>
            <path d="M441 281 617 181M446 283 617 184" fill="none"/>
            <path d="M307 271.500 541 137.500" fill="none" stroke="#2a2a2c" stroke-width="1.600"/>
            <path d="M335 288 569 153.500" fill="none"/>
          </g>
          <ellipse cx="585" cy="221.700" rx="5" ry="8" transform="rotate(-22 585 221.700)" fill="#57555a" stroke="#222"/>
          <ellipse cx="602.700" cy="241.700" rx="2.300" ry="4" transform="rotate(-22 602.700 241.700)" fill="#57555a" stroke="#222" stroke-width=".6"/>
          <g fill="url(#hole)" stroke="#1f1f21" stroke-width=".8">
            <ellipse cx="517.300" cy="167.700" rx="9" ry="5.500"/><ellipse cx="470" cy="195.300" rx="9" ry="5.500"/><ellipse cx="422.300" cy="222.700" rx="9" ry="5.500"/><ellipse cx="374.300" cy="250" rx="9" ry="5.500"/>
          </g>
          <g fill="#48484b" stroke="#19191b" stroke-width=".9">
            <ellipse cx="536.700" cy="156.700" rx="10" ry="5.700"/><path d="M528 158q8-6 17 0" fill="none"/>
            <ellipse cx="441.300" cy="211.500" rx="11" ry="6.300"/><path d="M433 208v4q8-6 17 0" fill="none"/>
          </g>
          <g fill="url(#hole)" stroke="#1b1b1d" stroke-width=".7">
            <ellipse cx="512.700" cy="142.300" rx="4" ry="2.400"/><ellipse cx="465" cy="170" rx="4" ry="2.400"/><ellipse cx="460" cy="178" rx="5" ry="2.800"/><ellipse cx="560.300" cy="170" rx="4" ry="2.400"/><ellipse cx="512.700" cy="197.300" rx="4" ry="2.400"/><ellipse cx="498.300" cy="200" rx="5" ry="2.800"/><ellipse cx="474.300" cy="213.700" rx="5" ry="2.800"/><ellipse cx="465" cy="225" rx="4" ry="2.400"/><ellipse cx="450.700" cy="227.500" rx="5" ry="2.800"/><ellipse cx="436" cy="192" rx="5" ry="2.800"/><ellipse cx="417.300" cy="197.300" rx="4" ry="2.400"/><ellipse cx="412.300" cy="205.500" rx="5" ry="2.800"/><ellipse cx="388.300" cy="219" rx="5" ry="2.800"/><ellipse cx="365" cy="233" rx="5" ry="2.800"/><ellipse cx="341" cy="247" rx="5" ry="2.800"/><ellipse cx="317" cy="260.700" rx="5" ry="2.800"/><ellipse cx="427" cy="241.300" rx="5" ry="2.800"/><ellipse cx="403" cy="255" rx="5" ry="2.800"/><ellipse cx="379" cy="269" rx="5" ry="2.800"/><ellipse cx="355.300" cy="282.700" rx="5" ry="2.800"/><ellipse cx="365" cy="323" rx="1.800" ry="2.300"/>
          </g>
          <use href="#bolt"/><use href="#bolt" transform="translate(72.500 75)"/>
          <g fill="none" stroke="#e2a633" stroke-width=".9">
            <ellipse cx="429" cy="293.700" rx="8" ry="14" transform="rotate(-27 429 293.700)" stroke="#f3bd3d" stroke-width="1.400"/>
            <ellipse cx="450.300" cy="281.300" rx="8" ry="13.500" transform="rotate(-27 450.300 281.300)"/>
            <path d="M422 281 444 269M435 307 457.500 294"/><path d="M408 306 473.500 268" stroke-dasharray="2 1"/>
          </g>
          <g stroke="#9fa4aa" stroke-width=".6" stroke-linejoin="round">
            <path d="m774.500 371.500 14.500 7.500-14.500 9-15.500-7z" fill="#f5f6f7"/><path d="m759 381 15.500 7-.5 16.500-13.500-8.500z" fill="#e7e8ea"/><path d="m789 379-14.500 9-.5 16.500 14-6.500z" fill="#eff0f1"/>
          </g>
          <path d="M774.500 388v-8" stroke="#4d8edb"/><path d="m774.500 388 7 4" stroke="#e49143"/><circle cx="774.500" cy="388" r="1.200" fill="#b1a63f"/>
          <g class="cubetext"><text x="771" y="379">TOP</text><text x="762" y="391" transform="rotate(25 762 391)">FRONT</text><text x="777" y="398" transform="rotate(-28 777 398)">RIGHT</text></g>
        </svg>

        <div class="finder">
          <div class="grip"></div>
          <input type="text" aria-label="查找部件" placeholder="用以查找部件的类型">
          <ul class="tree">
            <li class="root"><svg class="i"><use href="#mini"/></svg><svg class="i"><use href="#mini"/></svg><span>04 Auto.asm</span></li>
            <li><s>+</s><input type="checkbox" checked aria-label="坐标系"><svg class="i"><use href="#coord"/></svg><span>坐标系</span></li>
            <li class="dim"><s>+</s><input type="checkbox" aria-label="参考平面"><svg class="i"><use href="#plane"/></svg><span>参考平面</span></li>
            <li><s></s><input type="checkbox" checked aria-label="部件 1"><svg class="i"><use href="#solid"/></svg><svg class="i"><use href="#mini"/></svg><span>Slt-25-100-P-A Top Of Mi</span></li>
            <li><s></s><input type="checkbox" checked aria-label="部件 2"><svg class="i"><use href="#solid"/></svg><svg class="i"><use href="#mini"/></svg><span>Slt-25-100 Front Face Pl</span></li>
            <li><s></s><input type="checkbox" checked aria-label="部件 3"><svg class="i"><use href="#solid"/></svg><svg class="i"><use href="#mini"/></svg><span>8mm Hex Bolt X 45Mm par:</span></li>
            <li><s></s><input type="checkbox" checked aria-label="部件 4"><svg class="i"><use href="#solid"/></svg><svg class="i"><use href="#mini"/></svg><span>8mm Hex Bolt X 45Mm-va0.</span></li>
            <li><s></s><input type="checkbox" checked aria-label="部件 5"><svg class="i"><use href="#solid"/></svg><svg class="i"><use href="#tick"/></svg><span class="hot">螺栓.par:1</span></li>
            <li><s></s><input type="checkbox" checked aria-label="部件 6"><svg class="i"><use href="#solid"/></svg><svg class="i"><use href="#tick"/></svg><span>螺栓.par:2</span></li>
          </ul>
          <div class="spacer"></div>
          <div class="hbar"><span>‹</span><i class="full"></i><span>›</span></div>
          <ul class="rels">
            <li class="rhead"><svg class="i"><use href="#solid"/></svg>螺栓 par 1</li>
            <li><svg class="i"><use href="#mate"/></svg>Slt-25-100-P-A Top Of Mini Sli</li>
            <li><svg class="i"><use href="#axis"/></svg>Slt-25-100-P-A Top Of Mini Sli</li>
            <li><svg class="i"><use href="#mate"/></svg>Slt-25-100-P-A Top Of Mini Sli</li>
          </ul>
          <div class="hbar"><span>‹</span><i class="mid"></i><span>›</span></div>
        </div>

        <form class="dialog" role="dialog" aria-labelledby="dt">
          <div class="dhead"><span id="dt">捕捉装配关系</span><span class="dx">✕</span></div>
          <div class="dbody">
            <div class="cols">
              <div class="col"><label for="la">不应用这些关系(N):</label><select id="la" size="4"></select></div>
              <div class="mid-btns"><button type="button" disabled>添加(A) &gt;&gt;</button><button type="button">&lt;&lt; 移除(R)</button></div>
              <div class="col"><label for="lb">应用这些关系(L):</label><select id="lb" size="4"><option class="picked">轴对齐</option><option>贴合</option><option>平面对齐</option></select></div>
            </div>
            <fieldset><legend>保留数据</legend>
              <label class="keep"><input type="checkbox" disabled>将这些预定义关系保存在零件或子装配文件中。</label>
              <p>（如果以上选项被禁用，则表示对当前选定的零件或子装配文件没有写的权<br>限。如果对该文件没有写权限，或选择不在该文件中保存此信息，您仍然<br>可以在此设计会话中使用这些关系。）</p>
            </fieldset>
            <div class="acts"><button type="button" class="ok">确定</button><button type="button">取消</button><button type="button">帮助(X)</button></div>
          </div>
          <svg class="ptr" viewBox="0 0 14 14"><use href="#cursor"/></svg>
        </form>
      </div>
      <div class="prompt"><a href="#"><svg class="i"><use href="#win"/></svg>提示条</a><div class="line"></div><div class="fmt"><span>⇕</span><b>A</b><b>A</b><span>a</span><span>▼</span><span>🖈</span><span>✕</span></div></div>
    </section>
  </main>

  <footer class="status">
    <input type="text" aria-label="查找命令" placeholder="查找命令">
    <svg class="i"><use href="#go"/></svg><svg class="i"><use href="#fit"/></svg><svg class="i"><use href="#mag"/></svg><svg class="i"><use href="#fit"/></svg><svg class="i"><use href="#play"/></svg><svg class="i"><use href="#leaf"/></svg><svg class="i"><use href="#spin"/></svg><svg class="i"><use href="#cube"/></svg><svg class="i"><use href="#cparts"/></svg><svg class="i"><use href="#filter"/></svg><svg class="i"><use href="#round"/></svg>
    <input type="range" aria-label="缩放" value="45">
    <svg class="i"><use href="#round"/></svg><svg class="i"><use href="#rec"/></svg><svg class="i"><use href="#stop"/></svg><svg class="i"><use href="#person"/></svg>
  </footer>
</div>
</body>
</html>
```
FILE: styles.css
```css
* { box-sizing: border-box; }
html, body { margin: 0; height: 100%; }
body {
  font: 5px/7px "Liberation Sans", "Noto Sans CJK SC", sans-serif;
  color: #3c3c40;
  background: #f1f1f4;
  overflow: hidden;
}
.sprite { position: absolute; width: 0; height: 0; }
button, input, select { font: inherit; color: inherit; margin: 0; padding: 0; border: 0; border-radius: 0; background: none; }
a { color: inherit; text-decoration: none; }
ul { list-style: none; margin: 0; padding: 0; }
h2 { margin: 0; font-size: 5px; font-weight: 400; line-height: 7px; text-align: center; color: #77777c; }
i, em, s { font-style: normal; text-decoration: none; }
.i { width: 8px; height: 8px; flex: none; display: block; }

.app { display: flex; flex-direction: column; height: 100vh; border-top: 1px solid #6d666b; }

/* header */
.top { display: grid; grid-template-columns: 18px 1fr; grid-template-rows: 10px 10px; flex: none; background: #f0f0f3; }
.appbtn { grid-row: 1 / 3; margin: 0 1px 3px; border: 1px solid #b8c4d8; border-radius: 2px; background: #fff; }
.appbtn svg { width: 12px; height: 12px; display: block; margin: auto; }
.titlebar { display: grid; grid-template-columns: 1fr auto 1fr; align-items: center; padding-right: 2px; }
.qat { display: flex; align-items: center; gap: 3px; padding-left: 12px; }
.qat b { font-size: 4px; color: #66666c; font-weight: 400; }
.title { color: #a0a0a6; padding-right: 14px; }
.wctl { display: flex; justify-content: flex-end; gap: 8px; color: #a7a7ac; }
.wctl span { width: 4px; }
.tabs { display: flex; padding-left: 13px; line-height: 10px; }
.tabs a { padding: 0 6px; }
.tabs .on { background: #fff; color: #2d5ca5; border-top: 1px solid #8fa9d4; font-weight: 700; line-height: 9px; }
.dctl { margin-left: auto; display: flex; align-items: center; gap: 3px; padding-right: 1px; }
.dctl .i { width: 7px; height: 7px; }

/* ribbon */
.ribbon { display: flex; flex: none; height: 38px; background: #fbfbfd; border-bottom: 1px solid #e2e2e6; padding: 2px 0 0 1px; }
.group { display: flex; flex-direction: column; justify-content: space-between; border-right: 1px solid #dddde2; padding: 0 1px 1px; }
.row { display: flex; height: 28px; }
.row .big { flex: none; height: 28px; padding: 0 1px; }
.big { display: flex; flex-direction: column; align-items: center; line-height: 7px; position: relative; }
.big svg { width: 14px; height: 14px; margin-bottom: 3px; flex: none; }
.big i, .icons i { font-size: 3px; line-height: 4px; color: #555; }
.big.off { color: #b4b4ba; }
.big.sel { background: #c5d9ee; }
.split { margin-left: 3px; border-left: 1px solid #e4e4e8; }
.icons { display: grid; grid-auto-rows: 8px; gap: 1px; padding-top: 1px; align-items: center; justify-items: center; }
.one { grid-template-columns: 8px; margin-left: 3px; }
.three { grid-template-columns: repeat(3, 8px); column-gap: 3px; margin-left: 1px; }
.near { column-gap: 2px; margin-left: 4px; }
.near + .near { margin-left: 6px; }
.g1 { width: 40px; padding-left: 3px; }
.g2 { width: 52px; }
.g3 { width: 143px; }
.g4 { width: 86px; padding-left: 2px; }
.g5 { width: 120px; }
.g6 { width: 106px; }
.g7 { width: 72px; padding-left: 2px; }
.g8 { width: 82px; padding-left: 2px; }
.g1 .row, .g2 .row, .g3 .row { padding-left: 1px; }
.g6 .big:first-child { padding: 0 4px; }
.cfg { display: flex; flex-direction: column; gap: 3px; padding-top: 3px; }
.cfgrow { display: flex; gap: 2px; }
.cfgrow select { width: 54px; height: 10px; border: 1px solid #bfc0c6; appearance: none; background: linear-gradient(#77777c, #77777c) right 2px center / 2px 1px no-repeat, #fff; }

.quick { flex: none; height: 10px; display: flex; justify-content: center; padding-left: 54px; background: #f3f3f6; }
.quickbar { display: flex; gap: 3px; background: #fafafc; padding: 0 2px; }
.quickbar button { display: flex; align-items: center; gap: 1px; white-space: nowrap; }
.quickbar .i { width: 7px; height: 7px; }

/* side panel */
.body { display: flex; flex: 1; min-height: 0; }
.side { width: 89px; flex: none; display: flex; flex-direction: column; background: #f1f1f4; border-left: 1px solid #9a9aa0; border-right: 1px solid #dcdce0; }
.phead { display: flex; align-items: center; height: 7px; gap: 3px; color: #3b6cb3; padding-right: 3px; }
.phead span { flex: 1; }
.phead em { color: #444; width: 5px; font-size: 5px; }
.ptabs { display: flex; align-items: center; justify-content: space-between; height: 11px; padding: 0 2px 0 1px; color: #2e62ab; }
.ptabs .act { background: #dfe8f5; }
.ptools { display: flex; align-items: center; justify-content: space-between; height: 13px; background: #fafafb; padding-right: 2px; }
.ptools .i:first-child { width: 7px; margin-right: 6px; }
.path { display: flex; align-items: center; gap: 1px; height: 10px; border: 1px solid #c9c9ce; background: #ececef; font: 5px/8px "Liberation Mono", monospace; }
.path span { flex: 1; text-align: left; }
.path .chev { width: 6px; height: 4px; margin-right: 1px; }
.lists { flex: 220 0 0; min-height: 0; display: grid; grid-template-columns: 71px 1fr; grid-template-rows: minmax(0, 1fr); background: #fff; font: 4px/6px "DejaVu Sans Mono", monospace; color: #0c0c10; padding-top: 1px; }
.lists ul { display: grid; grid-template-rows: repeat(31, minmax(0, 1fr)); min-width: 0; min-height: 0; }
.lists li { display: flex; align-items: center; gap: 1px; white-space: nowrap; min-height: 0; }
.lists li::before { content: ""; flex: none; width: 7px; height: 7px; border: 1px solid #ef9a76; background: linear-gradient(#2f86d8, #2f86d8) 1px 1px / 2px 4px no-repeat, linear-gradient(#2f86d8, #2f86d8) 1px 3px / 4px 2px no-repeat, #d7e9fa; }
.lists .d::before { width: 6px; border: 0; margin-right: 1px; background: #f5dc8b; }
.lists .cur::before { background: #aebf82; }
.lists .a::before { background: linear-gradient(#e8bd42, #e8bd42) 3px 0 / 2px 3px no-repeat, linear-gradient(#3d7cba, #3d7cba) 0 2px / 4px 3px no-repeat, #d7e9c0; }
.hbar { flex: none; display: flex; align-items: center; height: 8px; background: #f0f0f2; padding: 0 2px; gap: 2px; color: #333; font-size: 6px; }
.hbar span { width: 3px; line-height: 6px; }
.hbar i { height: 6px; background: #cbcbce; }
.hbar span:last-child { margin-left: auto; }
.short { width: 9px; }
.full { flex: 1; }
.mid { width: 53px; }
.preview { flex: 82 0 0; display: flex; align-items: center; justify-content: center; margin: 1px 0 2px; border: 1px solid #b5b5ba; border-top-color: #77777c; font-size: 6px; font-weight: 700; color: #111; background: #f1f1f4; }

/* work area */
.work { flex: 1; display: flex; flex-direction: column; min-width: 0; }
.docs { display: flex; justify-content: space-between; flex: none; height: 12px; background: #fff; border-bottom: 1px solid #6d9ccc; padding: 1px 0 0 1px; }
.doc { display: flex; align-items: center; width: 58px; padding: 0 2px 0 6px; gap: 1px; border: 1px solid #9fb2d6; border-bottom: 0; color: #2e5caa; font-size: 5px; }
.doc span { flex: 1; }
.doc b { font-weight: 400; font-size: 5px; }
.docctl { display: flex; gap: 3px; align-items: center; color: #77777c; }
.view { flex: 1; position: relative; display: flex; min-height: 0; overflow: hidden; }
.scene { position: absolute; inset: 0; width: 100%; height: 100%; }
.cubetext { font: 700 4px "Liberation Sans", sans-serif; fill: #81868d; }
.finder { position: relative; width: 105px; padding: 0 1px 1px 2px; display: flex; flex-direction: column; }
.grip { height: 4px; margin: 0 -1px 1px; background: linear-gradient(90deg, #d9dadd 42%, #b4b6ba 42%, #b4b6ba 58%, #d9dadd 58%); border-bottom: 1px solid #9d9fa3; }
.finder > input { height: 8px; background: #fff; border: 1px solid #c9d6e5; padding: 0 1px; }
.finder > input::placeholder { color: #77777c; opacity: 1; }
.tree { display: grid; grid-template-rows: repeat(9, 1fr); height: 60px; margin-top: 1px; font: 700 5px/6px "Liberation Mono", "Noto Sans CJK SC", monospace; color: #14181e; }
.tree li { display: flex; align-items: center; gap: 1px; white-space: nowrap; }
.tree .i { width: 6px; height: 6px; }
.tree s { width: 6px; text-align: center; margin-left: 2px; font-weight: 400; flex: none; }
.tree input { appearance: none; flex: none; width: 5px; height: 5px; border: 1px solid #51647c; background: #fff; }
.tree input:checked { background: linear-gradient(135deg, #fff 30%, #444 30%, #444 60%, #fff 60%); }
.tree .dim { color: #5f7b98; font-weight: 400; }
.tree .dim input { border-color: #c3d6ea; }
.tree .hot { background: #f8c98c; }
.spacer { flex: 1; }
.rels { height: 48px; font: 5px/7px "Liberation Mono", "Noto Sans CJK SC", monospace; color: #33373c; }
.rels li { display: flex; align-items: center; height: 7px; padding-left: 5px; white-space: nowrap; }
.rels .rhead { padding-left: 0; height: 8px; gap: 1px; background: linear-gradient(#e6952d, #e6952d) 0 0 / 8px 1px no-repeat; }
.rels .i { width: 6px; height: 6px; }
.prompt { flex: none; display: flex; height: 11px; border-top: 2px solid #d9dadd; background: #fff; }
.prompt a { display: flex; align-items: center; gap: 2px; width: 30px; padding-left: 2px; color: #3465b0; background: #eef0f5; border-right: 1px solid #c7cad0; }
.line { flex: 1; }
.fmt { display: flex; align-items: center; gap: 3px; padding: 0 1px 0 3px; background: #f3f3f5; color: #111; }
.fmt span, .fmt b { width: 4px; }
.fmt b:first-of-type { font-size: 7px; }

/* status bar */
.status { flex: none; display: flex; align-items: center; justify-content: flex-end; gap: 2px; height: 9px; background: #35569b; }
.status input[type="text"] { width: 59px; height: 8px; background: #fff; padding: 0 1px; }
.status input[type="text"]::placeholder { color: #a9a9ae; opacity: 1; }
.status .i { width: 7px; height: 7px; }
.status input[type="range"] { appearance: none; width: 48px; height: 1px; background: #b9c8e4; }
.status input[type="range"]::-webkit-slider-thumb { appearance: none; width: 4px; height: 6px; background: #d9e3f3; }

/* dialog */
.dialog { position: absolute; right: 113px; top: 176px; width: 189px; margin: 0; background: #f0f0f0; border: 1px solid #8a9096; box-shadow: 0 1px 5px rgba(0, 0, 0, .5); color: #1c1c1e; }
.dhead { display: flex; justify-content: space-between; align-items: center; height: 12px; padding: 0 3px; background: #fff; }
.dx { font-size: 6px; }
.dbody { padding: 2px 3px 4px; }
.cols { display: flex; justify-content: space-between; align-items: flex-start; }
.col { width: 71px; display: flex; flex-direction: column; }
.col label { line-height: 6px; white-space: nowrap; }
.col select { height: 44px; overflow: hidden; border: 1px solid #9ea1a6; background: #fff; }
.col option { padding: 0; min-height: 5px; line-height: 5px; }
.col .picked { background: #1276d6; color: #fff; }
.mid-btns { display: flex; flex-direction: column; gap: 3px; padding-top: 18px; width: 28px; }
.dialog button { height: 9px; line-height: 7px; border: 1px solid #b4b4b7; background: #e2e2e4; white-space: nowrap; }
.dialog button:disabled { background: #cbcbcd; color: #7d7d80; }
fieldset { margin: 4px 0 0; padding: 1px 4px 4px; border: 1px solid #dcdcdd; height: 45px; min-width: 0; }
legend { padding: 0 1px; line-height: 6px; font-weight: 700; }
.keep { display: flex; align-items: center; gap: 1px; height: 8px; color: #7f7f82; }
.keep input { appearance: none; width: 5px; height: 5px; border: 1px solid #cfcfd1; background: #fff; }
fieldset p { margin: 2px 0 0; line-height: 6px; white-space: nowrap; }
.acts { display: flex; justify-content: flex-end; gap: 3px; margin-top: 3px; }
.acts button { width: 31px; }
.dialog .ok { border-color: #1d78d2; outline: 1px solid #8cbbe8; outline-offset: -2px; }
.ptr { position: absolute; left: 97px; bottom: -2px; width: 9px; height: 9px; }
```
